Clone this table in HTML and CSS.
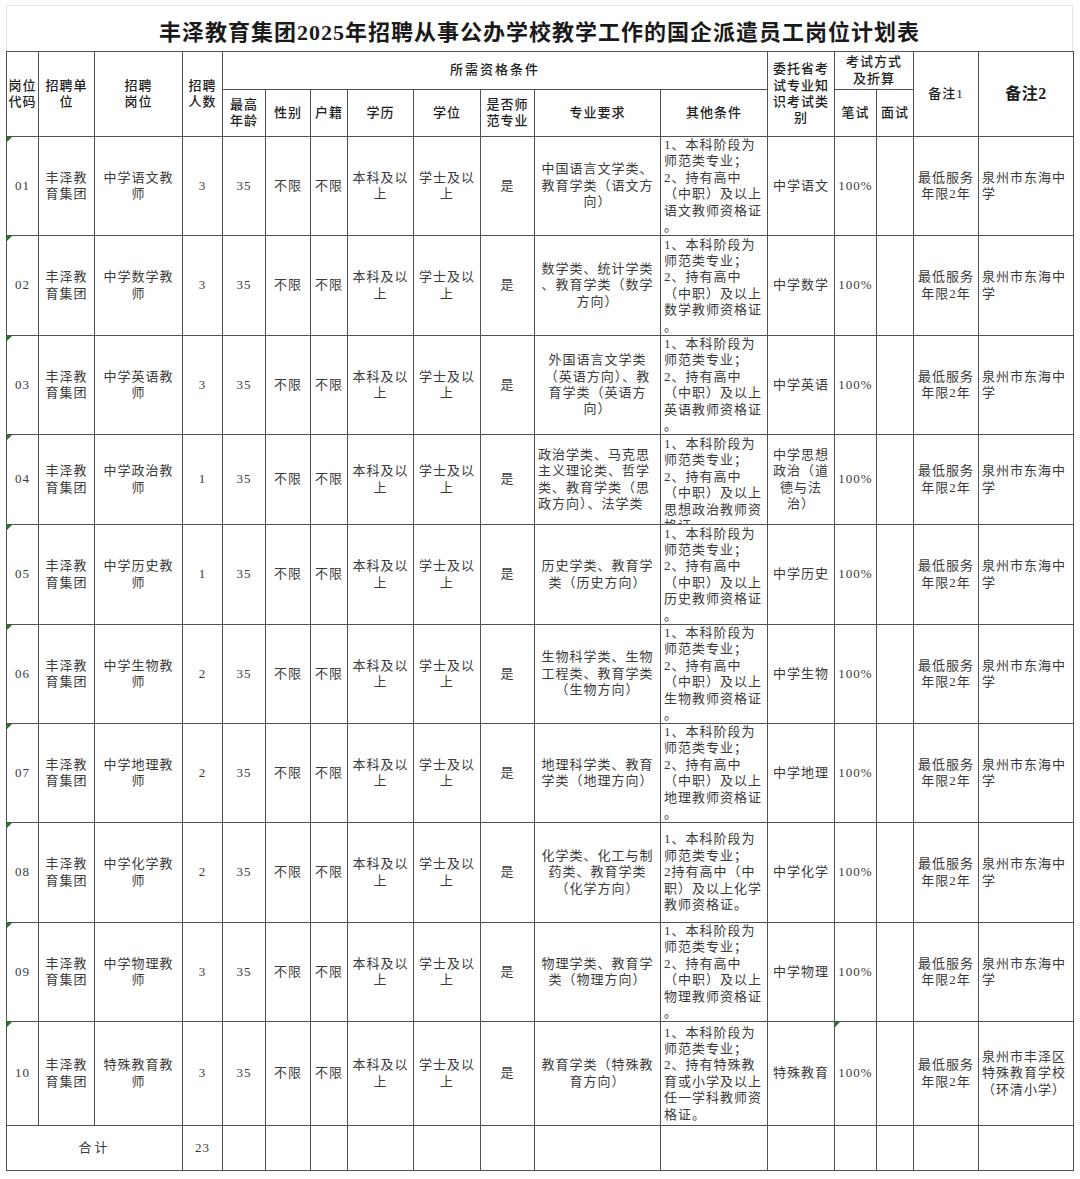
FILE: index.html
```html
<!DOCTYPE html>
<html lang="zh-CN">
<head>
<meta charset="utf-8">
<title>岗位计划表</title>
<link rel="stylesheet" href="styles.css">
</head>
<body>
<div class="sheet">
  <div class="title">丰泽教育集团2025年招聘从事公办学校教学工作的国企派遣员工岗位计划表</div>
  <table class="grid">
    <colgroup>
      <col class="c-code"><col class="c-unit"><col class="c-post"><col class="c-num">
      <col class="c-age"><col class="c-sex"><col class="c-hj"><col class="c-edu">
      <col class="c-deg"><col class="c-sf"><col class="c-major"><col class="c-other">
      <col class="c-exam"><col class="c-bs"><col class="c-ms"><col class="c-n1"><col class="c-n2">
    </colgroup>
    <thead>
      <tr class="h1">
        <th rowspan="2" class="tight">岗位<br>代码</th>
        <th rowspan="2">招聘单<br>位</th>
        <th rowspan="2">招聘<br>岗位</th>
        <th rowspan="2">招聘<br>人数</th>
        <th colspan="8" class="wide">所需资格条件</th>
        <th rowspan="2">委托省考<br>试专业知<br>识考试类<br>别</th>
        <th colspan="2">考试方式<br>及折算</th>
        <th rowspan="2">备注1</th>
        <th rowspan="2" class="big">备注2</th>
      </tr>
      <tr class="h2">
        <th>最高<br>年龄</th>
        <th>性别</th>
        <th class="tight">户籍</th>
        <th>学历</th>
        <th>学位</th>
        <th>是否师<br>范专业</th>
        <th>专业要求</th>
        <th>其他条件</th>
        <th>笔试</th>
        <th class="tight">面试</th>
      </tr>
    </thead>
    <tbody>
      <tr class="r99">
        <td class="flag">01</td><td>丰泽教<br>育集团</td><td>中学语文教<br>师</td><td>3</td><td>35</td><td>不限</td><td class="tight">不限</td><td>本科及以<br>上</td><td>学士及以<br>上</td><td>是</td>
        <td>中国语言文学类、<br>教育学类（语文方<br>向）</td>
        <td class="left"><div class="oc">1、本科阶段为<br>师范类专业；<br>2、持有高中<br>（中职）及以上<br>语文教师资格证<br>。</div></td>
        <td>中学语文</td><td>100%</td><td></td><td>最低服务<br>年限2年</td><td class="left">泉州市东海中<br>学</td>
      </tr>
      <tr class="r100">
        <td class="flag">02</td><td>丰泽教<br>育集团</td><td>中学数学教<br>师</td><td>3</td><td>35</td><td>不限</td><td class="tight">不限</td><td>本科及以<br>上</td><td>学士及以<br>上</td><td>是</td>
        <td>数学类、统计学类<br>、教育学类（数学<br>方向）</td>
        <td class="left"><div class="oc">1、本科阶段为<br>师范类专业；<br>2、持有高中<br>（中职）及以上<br>数学教师资格证<br>。</div></td>
        <td>中学数学</td><td>100%</td><td></td><td>最低服务<br>年限2年</td><td class="left">泉州市东海中<br>学</td>
      </tr>
      <tr class="r99">
        <td class="flag">03</td><td>丰泽教<br>育集团</td><td>中学英语教<br>师</td><td>3</td><td>35</td><td>不限</td><td class="tight">不限</td><td>本科及以<br>上</td><td>学士及以<br>上</td><td>是</td>
        <td>外国语言文学类<br>（英语方向）、教<br>育学类（英语方<br>向）</td>
        <td class="left"><div class="oc">1、本科阶段为<br>师范类专业；<br>2、持有高中<br>（中职）及以上<br>英语教师资格证<br>。</div></td>
        <td>中学英语</td><td>100%</td><td></td><td>最低服务<br>年限2年</td><td class="left">泉州市东海中<br>学</td>
      </tr>
      <tr class="r90">
        <td class="flag">04</td><td>丰泽教<br>育集团</td><td>中学政治教<br>师</td><td>1</td><td>35</td><td>不限</td><td class="tight">不限</td><td>本科及以<br>上</td><td>学士及以<br>上</td><td>是</td>
        <td class="left">政治学类、马克思<br>主义理论类、哲学<br>类、教育学类（思<br>政方向）、法学类</td>
        <td class="left top"><div class="oc clip">1、本科阶段为<br>师范类专业；<br>2、持有高中<br>（中职）及以上<br>思想政治教师资<br>格证。</div></td>
        <td>中学思想<br>政治（道<br>德与法<br>治）</td><td>100%</td><td></td><td>最低服务<br>年限2年</td><td class="left">泉州市东海中<br>学</td>
      </tr>
      <tr class="r100">
        <td class="flag">05</td><td>丰泽教<br>育集团</td><td>中学历史教<br>师</td><td>1</td><td>35</td><td>不限</td><td class="tight">不限</td><td>本科及以<br>上</td><td>学士及以<br>上</td><td>是</td>
        <td>历史学类、教育学<br>类（历史方向）</td>
        <td class="left"><div class="oc">1、本科阶段为<br>师范类专业；<br>2、持有高中<br>（中职）及以上<br>历史教师资格证<br>。</div></td>
        <td>中学历史</td><td>100%</td><td></td><td>最低服务<br>年限2年</td><td class="left">泉州市东海中<br>学</td>
      </tr>
      <tr class="r99">
        <td class="flag">06</td><td>丰泽教<br>育集团</td><td>中学生物教<br>师</td><td>2</td><td>35</td><td>不限</td><td class="tight">不限</td><td>本科及以<br>上</td><td>学士及以<br>上</td><td>是</td>
        <td>生物科学类、生物<br>工程类、教育学类<br>（生物方向）</td>
        <td class="left"><div class="oc">1、本科阶段为<br>师范类专业；<br>2、持有高中<br>（中职）及以上<br>生物教师资格证<br>。</div></td>
        <td>中学生物</td><td>100%</td><td></td><td>最低服务<br>年限2年</td><td class="left">泉州市东海中<br>学</td>
      </tr>
      <tr class="r99">
        <td class="flag">07</td><td>丰泽教<br>育集团</td><td>中学地理教<br>师</td><td>2</td><td>35</td><td>不限</td><td class="tight">不限</td><td>本科及以<br>上</td><td>学士及以<br>上</td><td>是</td>
        <td>地理科学类、教育<br>学类（地理方向）</td>
        <td class="left"><div class="oc">1、本科阶段为<br>师范类专业；<br>2、持有高中<br>（中职）及以上<br>地理教师资格证<br>。</div></td>
        <td>中学地理</td><td>100%</td><td></td><td>最低服务<br>年限2年</td><td class="left">泉州市东海中<br>学</td>
      </tr>
      <tr class="r100">
        <td class="flag">08</td><td>丰泽教<br>育集团</td><td>中学化学教<br>师</td><td>2</td><td>35</td><td>不限</td><td class="tight">不限</td><td>本科及以<br>上</td><td>学士及以<br>上</td><td>是</td>
        <td>化学类、化工与制<br>药类、教育学类<br>（化学方向）</td>
        <td class="left"><div class="oc">1、本科阶段为<br>师范类专业；<br>2持有高中（中<br>职）及以上化学<br>教师资格证。</div></td>
        <td>中学化学</td><td>100%</td><td></td><td>最低服务<br>年限2年</td><td class="left">泉州市东海中<br>学</td>
      </tr>
      <tr class="r99">
        <td class="flag">09</td><td>丰泽教<br>育集团</td><td>中学物理教<br>师</td><td>3</td><td>35</td><td>不限</td><td class="tight">不限</td><td>本科及以<br>上</td><td>学士及以<br>上</td><td>是</td>
        <td>物理学类、教育学<br>类（物理方向）</td>
        <td class="left"><div class="oc">1、本科阶段为<br>师范类专业；<br>2、持有高中<br>（中职）及以上<br>物理教师资格证<br>。</div></td>
        <td>中学物理</td><td>100%</td><td></td><td>最低服务<br>年限2年</td><td class="left">泉州市东海中<br>学</td>
      </tr>
      <tr class="r104">
        <td class="flag">10</td><td>丰泽教<br>育集团</td><td>特殊教育教<br>师</td><td>3</td><td>35</td><td>不限</td><td class="tight">不限</td><td>本科及以<br>上</td><td>学士及以<br>上</td><td>是</td>
        <td>教育学类（特殊教<br>育方向）</td>
        <td class="left"><div class="oc">1、本科阶段为<br>师范类专业；<br>2、持有特殊教<br>育或小学及以上<br>任一学科教师资<br>格证。</div></td>
        <td>特殊教育</td><td class="flag">100%</td><td></td><td>最低服务<br>年限2年</td><td class="left">泉州市丰泽区<br>特殊教育学校<br>（环清小学）</td>
      </tr>
      <tr class="r45">
        <td colspan="3" class="sum">合计</td><td>23</td>
        <td></td><td></td><td></td><td></td><td></td><td></td><td></td><td></td><td></td><td></td><td></td><td></td><td></td>
      </tr>
    </tbody>
  </table>
</div>
</body>
</html>
```

FILE: styles.css
```css
html, body {
  margin: 0;
  padding: 0;
  background: #ffffff;
}

.sheet {
  width: 1067px;
  margin: 5px 0 0 6px;
  font-family: "Liberation Serif", "Noto Sans CJK SC", serif;
  color: #3a3a3a;
}

.title {
  height: 46px;
  border: 1px solid #e4e4e4;
  border-bottom: none;
  box-sizing: border-box;
  display: flex;
  align-items: center;
  justify-content: center;
  font-size: 22px;
  font-weight: 700;
  letter-spacing: 1px;
  color: #1a1a1a;
  padding-top: 2px;
}

.grid {
  width: 1067px;
  border-collapse: collapse;
  table-layout: fixed;
  border: 1px solid #333333;
}

.c-code { width: 32px; }
.c-unit { width: 56px; }
.c-post { width: 88px; }
.c-num { width: 40px; }
.c-age { width: 43px; }
.c-sex { width: 45px; }
.c-hj { width: 37px; }
.c-edu { width: 66px; }
.c-deg { width: 67px; }
.c-sf { width: 54px; }
.c-major { width: 126px; }
.c-other { width: 107px; }
.c-exam { width: 67px; }
.c-bs { width: 42px; }
.c-ms { width: 37px; }
.c-n1 { width: 65px; }
.c-n2 { width: 95px; }

.grid th,
.grid td {
  border: 1px solid #525252;
  padding: 0 3px;
  text-align: center;
  vertical-align: middle;
  font-size: 13px;
  line-height: 16.4px;
  letter-spacing: 1px;
  white-space: nowrap;
  overflow: hidden;
}

.grid th {
  font-weight: 500;
  color: #1e1e1e;
}

.grid th.big {
  font-size: 16px;
  font-weight: 700;
  letter-spacing: 0.5px;
}

.grid th.wide {
  letter-spacing: 2px;
}

.grid .tight {
  padding: 0;
}

.grid td.left {
  text-align: left;
}

.grid td.top {
  vertical-align: top;
}

.oc {
  max-height: 98px;
  overflow: hidden;
}

.oc.clip {
  max-height: 88px;
  padding-top: 1px;
}

.h1 { height: 38px; }
.h2 { height: 47px; }
.r99 { height: 99px; }
.r100 { height: 100px; }
.r90 { height: 90px; }
.r104 { height: 104px; }
.r45 { height: 45px; }

.grid td.sum {
  letter-spacing: 3px;
}

.grid td.flag {
  position: relative;
}

.grid td.flag::before {
  content: "";
  position: absolute;
  left: 0;
  top: 0;
  width: 0;
  height: 0;
  border-top: 5px solid #1f7a1f;
  border-right: 5px solid transparent;
}
```
